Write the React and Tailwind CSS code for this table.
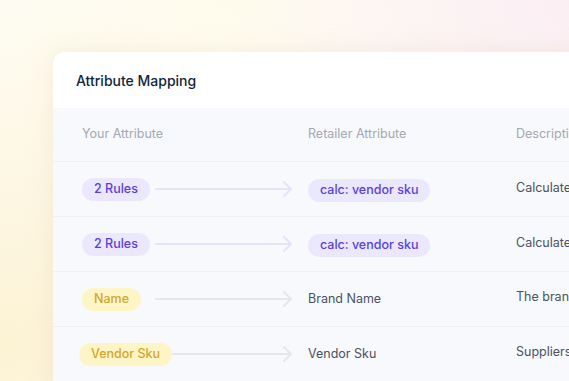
import React from 'react';

const rows = [
  { from: '2 Rules', tone: 'indigo', to: 'calc: vendor sku', toPill: true, desc: 'Calculated from vendor sku' },
  { from: '2 Rules', tone: 'indigo', to: 'calc: vendor sku', toPill: true, desc: 'Calculated from vendor sku' },
  { from: 'Name', tone: 'yellow', to: 'Brand Name', toPill: false, desc: 'The brand name of the product' },
  { from: 'Vendor Sku', tone: 'yellow', to: 'Vendor Sku', toPill: false, desc: 'Suppliers stock keeping unit', shift: true },
];

function Arrow({ color }) {
  return (
    <svg width="140" height="18" viewBox="0 0 140 18" fill="none" className="ml-[73px] [grid-area:1/1]">
      <path d="M0 9H136" stroke={color} strokeWidth="2" />
      <path d="M129 2L136 9L129 16" stroke={color} strokeWidth="2" strokeLinecap="round" strokeLinejoin="round" />
    </svg>
  );
}

export default function App() {
  return (
    <div
      className="w-[569px] h-[381px] overflow-hidden bg-[#fffdf8] bg-[radial-gradient(circle_at_0%_90%,#fcf2d4_0%,transparent_55%),radial-gradient(circle_at_100%_0%,#fbeef3_0%,transparent_50%),radial-gradient(circle_at_40%_0%,#fefbec_0%,transparent_60%)] pt-[52px] pl-[53px]"
      style={{ fontFamily: 'Inter, "Noto Sans", sans-serif' }}
    >
      <div className="w-[600px] h-[400px] bg-white rounded-tl-[12px] shadow-[0_0_24px_rgba(200,180,140,0.18)]">
        {/* Header */}
        <div className="h-[56px] pl-[23px] flex items-center">
          <h2 className="text-[14px] font-medium text-[#10263b]">Attribute Mapping</h2>
        </div>

        {/* Table */}
        <div className="bg-[#f8f9fc] h-full">
          <div className="grid grid-cols-[226px_208px_1fr] pl-[29px] h-[53px] items-center text-[12.5px] text-[#a3a8b3]">
            <div>Your Attribute</div>
            <div>Retailer Attribute</div>
            <div className="whitespace-nowrap">Description</div>
          </div>

          {rows.map((row, idx) => {
            const indigo = row.tone === 'indigo';
            return (
              <div
                key={idx}
                className="grid grid-cols-[226px_208px_1fr] pl-[29px] h-[55px] items-center border-t border-[#eef0f5]"
              >
                <div className="grid items-center">
                  <Arrow color={indigo ? '#e7e3fb' : '#e6e7eb'} />
                  <span
                    className={`[grid-area:1/1] relative justify-self-start h-[23px] px-[12px] rounded-full flex items-center text-[12.5px] font-medium ${
                      indigo ? 'bg-[#ebe8fd] text-[#5a3fdc]' : 'bg-[#fef5c7] text-[#d1a72a]'
                    } ${row.shift ? '-ml-[3px]' : ''}`}
                  >
                    {row.from}
                  </span>
                </div>
                <div>
                  {row.toPill ? (
                    <span className="inline-flex items-center h-[23px] px-[12px] rounded-full bg-[#ebe8fd] text-[#5a3fdc] text-[12.5px] font-medium">
                      {row.to}
                    </span>
                  ) : (
                    <span className="relative -top-[2px] text-[12.5px] text-[#4b5260]">{row.to}</span>
                  )}
                </div>
                <div className={`relative text-[12.5px] text-[#4b5260] whitespace-nowrap ${row.toPill ? '-top-[1px]' : '-top-[2px]'}`}>
                  {row.desc}
                </div>
              </div>
            );
          })}
        </div>
      </div>
    </div>
  );
}
